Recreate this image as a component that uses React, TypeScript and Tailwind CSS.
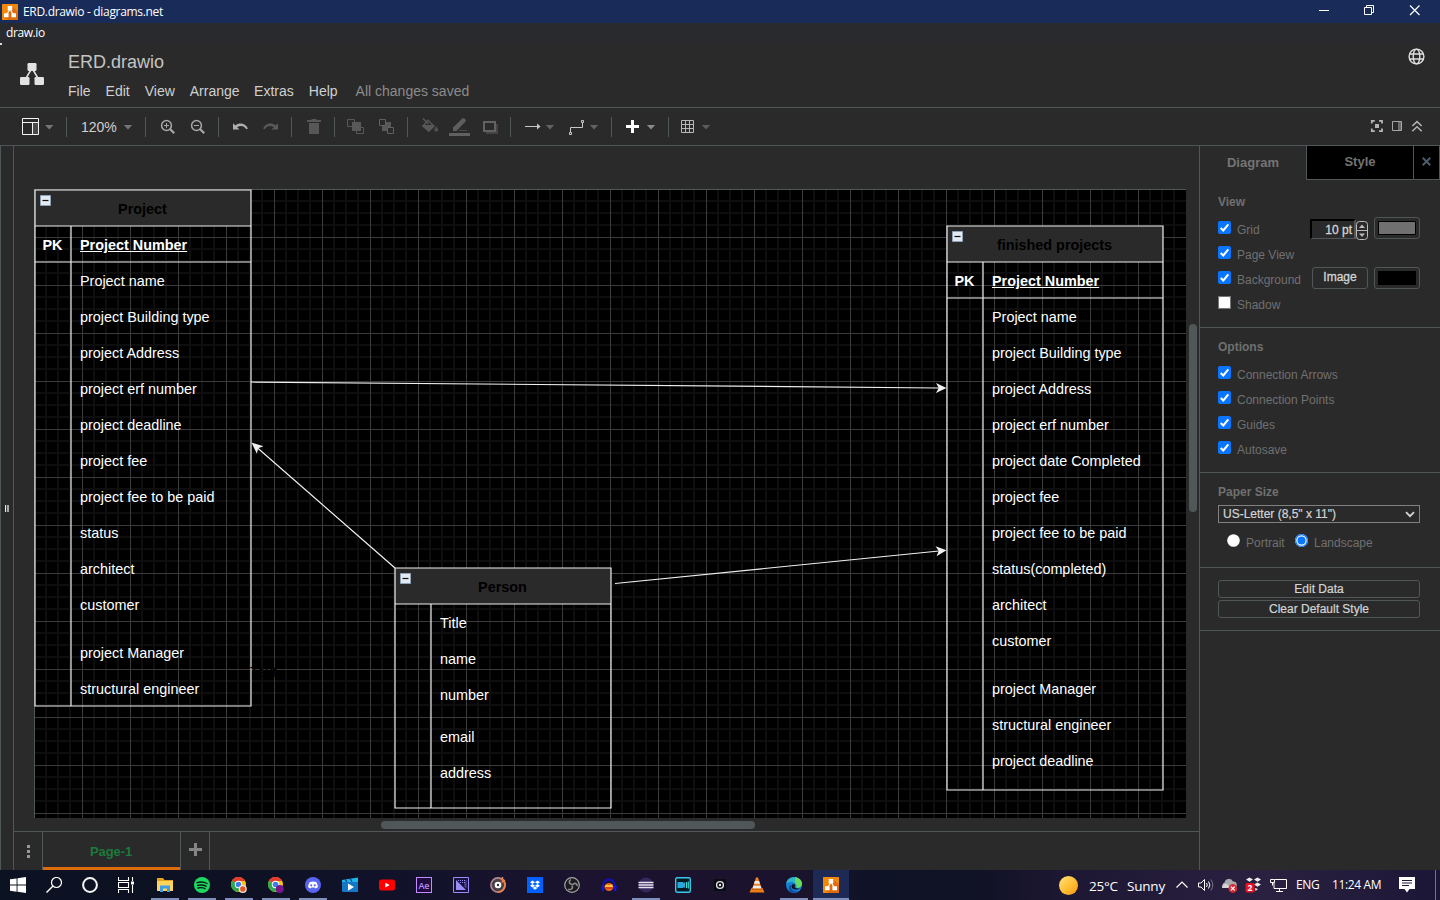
import React from "react";

type Kids = { children?: React.ReactNode };

/* ---------- toolbar ---------- */

function Tool({ x, w, children }: { x: number; w: number } & Kids) {
  return (
    <svg width={w} height={37} viewBox={`${x} 108 ${w} 37`} className="shrink-0" fill="none">
      {children}
    </svg>
  );
}

function Divider() {
  return <div className="h-5 w-px shrink-0 bg-[#505759]" />;
}

function Caret({ x, c = "#767676" }: { x: number; c?: string }) {
  return <path d={`M${x} 125h8.4l-4.2 4.6z`} fill={c} />;
}

function Toolbar() {
  return (
    <div className="flex h-[38px] shrink-0 items-center border-b border-[#505759]">
      <Tool x={0} w={66}>
        <path d="M22.5 118.5h16v16h-16zM22 122.5h17M32.5 122.5v12" stroke="#f4f4f4" />
        <path d="M33 123h5v11h-5z" fill="#4a4a4a" />
        <Caret x={45} />
      </Tool>
      <Divider />
      <div className="flex h-[37px] w-[78px] items-center">
        <span className="ml-[14px] w-[40px] pt-[2px] text-sm leading-[37px] text-[#cfcfcf]">120%</span>
        <Tool x={121} w={20}>
          <Caret x={123.8} />
        </Tool>
      </div>
      <Divider />
      <Tool x={146} w={36}>
        <circle cx="166.5" cy="125.5" r="4.9" stroke="#a8a8a8" strokeWidth="1.5" />
        <path d="M170.2 129.2l4 4" stroke="#a8a8a8" strokeWidth="2.2" />
        <path d="M164 125.5h5M166.5 123v5" stroke="#a8a8a8" />
      </Tool>
      <Tool x={182} w={36}>
        <circle cx="196.5" cy="125.5" r="4.9" stroke="#a8a8a8" strokeWidth="1.5" />
        <path d="M200.2 129.2l4 4" stroke="#a8a8a8" strokeWidth="2.2" />
        <path d="M194 125.5h5" stroke="#a8a8a8" />
      </Tool>
      <Divider />
      <Tool x={219} w={36}>
        <path d="M233 123.2v6.3h6.5l-2.4-2.3c3.3-2.2 7.1-1.600 9.200 2.100l1.600-.8c-2.400-5.200-8.400-6.400-12.500-3z" fill="#b0b0b0" />
      </Tool>
      <Tool x={255} w={36}>
        <path d="M278 123.200v6.300h-6.500l2.400-2.300c-3.300-2.200-7.100-1.600-9.200 2.100l-1.600-.8c2.400-5.200 8.400-6.400 12.500-3z" fill="#5a5a5a" />
      </Tool>
      <Divider />
      <Tool x={292} w={42}>
        <path d="M307 120h4l1-1h4l1 1h4v2h-14zM309 123h10v11h-10z" fill="#575757" />
      </Tool>
      <Divider />
      <Tool x={335} w={36}>
        <path d="M352 122h9v9h-9z" fill="#585858" />
        <path d="M352 126.500h-4.500v-7h7v2.500M359 133.500h4.500v-6h-2.500M356.500 131v2.500h4" stroke="#585858" />
      </Tool>
      <Tool x={371} w={36}>
        <path d="M382 122h9v9h-9z" fill="#585858" />
        <path d="M379.500 119.500h6v6h-6zM387.500 127.500h6v6h-6z" fill="#2a2a2a" stroke="#606060" />
      </Tool>
      <Divider />
      <Tool x={408} w={34}>
        <path d="M423 118.500l5.500 5.500M428 120.200l6 6-5.200 5-6-5z" stroke="#585858" strokeWidth="1.300" />
        <path d="M422 125h12.500l-5.800 7z" fill="#585858" />
        <path d="M436.200 126l1.800 3.200a1.900 1.900 0 1 1-3.600 0z" fill="#505050" />
      </Tool>
      <Tool x={442} w={34}>
        <path d="M453 131v-3.400l9-8.800c1.600-1.600 5 1.400 3.400 3l-9 9.200z" fill="#5e5e5e" />
        <path d="M459 130.500h8" stroke="#4a4a4a" />
        <path d="M449 133h21v3h-21z" fill="#606060" />
      </Tool>
      <Tool x={476} w={34}>
        <path d="M486 124h12v10h-12z" fill="#444" />
        <path d="M484 122h11v9h-11z" fill="#2a2a2a" stroke="#626262" strokeWidth="2" />
      </Tool>
      <Divider />
      <Tool x={511} w={50}>
        <path d="M525 126.500h12" stroke="#c8c8c8" />
        <path d="M537 123.500l3.500 3-3.500 3z" fill="#c8c8c8" />
        <Caret x={545.8} c="#626262" />
      </Tool>
      <Tool x={561} w={50}>
        <path d="M570.500 132v-4.500h12v-5" stroke="#c8c8c8" />
        <path d="M569.500 132.500h2v2h-2zM581.500 120.500h2v2h-2z" fill="#2a2a2a" stroke="#c8c8c8" />
        <Caret x={589.8} c="#626262" />
      </Tool>
      <Divider />
      <Tool x={612} w={56}>
        <path d="M626 126.500h13M632.500 120v13" stroke="#fff" strokeWidth="3" />
        <Caret x={646.8} c="#8a8a8a" />
      </Tool>
      <Divider />
      <Tool x={669} w={50}>
        <path d="M681.500 120.500h12v12h-12zM681 124.500h13M681 128.500h13M685.500 120v13M689.500 120v13" stroke="#b8b8b8" />
        <Caret x={701.8} c="#5c5c5c" />
      </Tool>
      <div className="grow" />
      <Tool x={1360} w={80}>
        <path d="M1371.800 123.500v-2.700h3M1379 120.800h3v2.700M1382 128.500v2.700h-3M1374.800 131.200h-3v-2.700" stroke="#b4b4b4" strokeWidth="1.800" />
        <path d="M1375 124h4v4h-4z" fill="#b4b4b4" />
        <path d="M1392.500 121.500h9v9h-9z" stroke="#a6a6a6" />
        <path d="M1398 122h3v8h-3z" fill="#6c6c6c" />
        <path d="M1412.300 126l4.700-4.400 4.700 4.400M1412.300 131.200l4.700-4.400 4.700 4.400" stroke="#b4b4b4" strokeWidth="1.500" />
      </Tool>
    </div>
  );
}

/* ---------- diagram ---------- */

type Field = { label: string; gap?: "sm" | "md" };

const projectFields: Field[] = [
  { label: "Project name" },
  { label: "project Building type" },
  { label: "project Address" },
  { label: "project erf number" },
  { label: "project deadline" },
  { label: "project fee" },
  { label: "project fee to be paid" },
  { label: "status" },
  { label: "architect" },
  { label: "customer" },
  { label: "project Manager", gap: "md" },
  { label: "structural engineer" },
];

const finishedFields: Field[] = [
  { label: "Project name" },
  { label: "project Building type" },
  { label: "project Address" },
  { label: "project erf number" },
  { label: "project date Completed" },
  { label: "project fee" },
  { label: "project fee to be paid" },
  { label: "status(completed)" },
  { label: "architect" },
  { label: "customer" },
  { label: "project Manager", gap: "md" },
  { label: "structural engineer" },
  { label: "project deadline" },
];

const personFields: Field[] = [
  { label: "Title" },
  { label: "name" },
  { label: "number" },
  { label: "email", gap: "sm" },
  { label: "address" },
];

function Entity({ place, h, title, pk, fields }: { place: string; h: number; title: string; pk?: boolean; fields: Field[] }) {
  return (
    <div className={`absolute w-[216px] text-[14.4px] text-white ${place}`}>
      <svg className="absolute -left-px -top-px" width={218} height={h + 2} viewBox={`-1 -1 218 ${h + 2}`} fill="none">
        <path d="M0 0h216v36H0z" fill="#2a2a2a" />
        <path d={`M0 0h216v${h}H0zM0 36h216M36 36V${h}${pk ? "M0 72h216" : ""}`} stroke="#f0f0f0" strokeWidth="1.2" />
        <path d="M5.5 5.500h10v10h-10z" fill="#e4eaf0" stroke="#8fa3b8" />
        <path d="M7.500 10.500h6" stroke="#111" strokeWidth="1.200" />
      </svg>
      <div className="relative flex h-9 items-center justify-center pr-px pt-1 font-bold text-black">{title}</div>
      {pk && (
        <div className="relative flex h-9 items-center pt-1 font-bold">
          <span className="w-9 pr-px text-center">PK</span>
          <span className="pl-[9px] underline">Project Number</span>
        </div>
      )}
      {fields.map((f) => (
        <div
          key={f.label}
          className={`relative flex h-9 items-center whitespace-nowrap pl-[45px] pt-1 ${f.gap === "md" ? "mt-3" : f.gap === "sm" ? "mt-1.5" : ""}`}
        >
          {f.label}
        </div>
      ))}
    </div>
  );
}

function Canvas() {
  return (
    <div className="relative min-h-0 grow overflow-hidden">
      <svg className="absolute left-[20px] top-[43px]" width={1152} height={629}>
        <defs>
          <pattern id="grid" width="48" height="48" patternUnits="userSpaceOnUse">
            <path d="M11 0h2v48h-2zM23 0h2v48h-2zM35 0h2v48h-2zM0 11h48v2h-48zM0 23h48v2h-48zM0 35h48v2h-48z" fill="#0e0e0e" />
            <path d="M0 0h48v1h-48zM0 0h1v48h-1z" fill="#3b3b3b" />
          </pattern>
        </defs>
        <rect width="1152" height="629" fill="#000" />
        <rect width="1152" height="629" fill="url(#grid)" />
        <path d="M0 .5h1152M.5 0v629" stroke="#505759" />
      </svg>
      <Entity place="left-[21px] top-[44px]" h={516} title="Project" pk fields={projectFields} />
      <Entity place="left-[381px] top-[422px]" h={240} title="Person" fields={personFields} />
      <Entity place="left-[933px] top-[80px]" h={564} title="finished projects" pk fields={finishedFields} />
      <div className="absolute left-[236px] top-[518px] text-[14.4px] leading-[17px] text-black">Text</div>
      <svg className="absolute left-0 top-0" width={1185} height={685} viewBox="14 146 1185 685">
        <path d="M251 382L939 388M395 568L257 447.500M615 583.500L939 551" stroke="#f0f0f0" strokeWidth="1.200" fill="none" />
        <g fill="#f0f0f0">
          <path d="M0 0l-10.500 5 2.700-5-2.700-5z" transform="translate(946.500 388) rotate(.5)" />
          <path d="M0 0l-10.500 5 2.700-5-2.700-5z" transform="translate(946.500 550.300) rotate(-5.700)" />
          <path d="M0 0l-11.500 5 2.700-5-2.700-5z" transform="translate(251.500 442.500) rotate(221)" />
        </g>
      </svg>
      <div className="absolute left-[1175px] top-[178px] h-[188px] w-2 rounded-full bg-[#505759]" />
      <div className="absolute left-[367px] top-[675px] h-2 w-[374px] rounded-full bg-[#505759]" />
    </div>
  );
}

function PageTabs() {
  return (
    <div className="flex h-[39px] shrink-0 border-t border-[#505759]">
      <div className="flex w-7 flex-col items-center justify-center gap-[2px] pl-px">
        <i className="size-[3px] bg-[#999]" />
        <i className="size-[3px] bg-[#999]" />
        <i className="size-[3px] bg-[#999]" />
      </div>
      <div className="flex w-[139px] flex-col border-x border-[#505759]">
        <div className="grow pt-px text-center text-[13px] font-bold leading-[37px] tracking-[-0.1px] text-[#1c7a3b]">
          <span className="pr-px">Page-1</span>
        </div>
        <div className="-mt-[3px] h-[3px] shrink-0 bg-[#df6c0c]" />
      </div>
      <div className="flex w-[29px] justify-center border-r border-[#505759] pt-[11px]">
        <svg width="13" height="13">
          <path d="M0 6.500h13M6.500 0v13" stroke="#858585" strokeWidth="3" />
        </svg>
      </div>
    </div>
  );
}

/* ---------- format panel ---------- */

function Check({ label, on = true, children }: { label: string; on?: boolean } & Kids) {
  return (
    <div className="flex h-[25px] items-start">
      <svg width="13" height="13" className="mt-[4px] shrink-0">
        <rect width="13" height="13" rx="2" fill={on ? "#0a75ff" : "#fff"} />
        {!on && <rect x=".5" y=".5" width="12" height="12" rx="1.500" fill="none" stroke="#767676" />}
        {on && <path d="M2.700 7l2.600 2.500 5-6.200" fill="none" stroke="#fff" strokeWidth="2" />}
      </svg>
      <span className="ml-[6px] mt-[5px] w-[75px] whitespace-nowrap text-xs leading-[16px] text-[#707070]">{label}</span>
      {children}
    </div>
  );
}

function Heading({ children }: Kids) {
  return <div className="h-[15px] pt-px text-xs font-bold leading-[15px] text-[#707070]">{children}</div>;
}

function Swatch({ color }: { color: string }) {
  return (
    <div className="ml-[6px] h-[22px] w-[46px] shrink-0 rounded-[3px] border border-[#505759] p-[3px]">
      <div className={`h-[14px] w-full border border-black ${color}`} />
    </div>
  );
}

function FormatPanel() {
  return (
    <aside className="flex w-[241px] shrink-0 flex-col border-l border-[#505759]">
      <div className="flex h-[34px] text-[13px] font-bold text-[#747474]">
        <div className="w-[106px] text-center leading-[33px]">Diagram</div>
        <div className="w-[107px] border-b border-l border-[#505759] bg-black text-center leading-[31px]">Style</div>
        <div className="flex w-[27px] items-center justify-center border-x border-b border-[#505759] bg-black pb-[2px]">
          <svg width="9" height="9">
            <path d="M.7.7l7.600 7.600M8.300.7L.7 8.300" stroke="#4b5c6c" strokeWidth="2" />
          </svg>
        </div>
      </div>

      <section className="h-[148px] border-b border-[#505759] pl-[18px] pt-[14px]">
        <Heading>View</Heading>
        <div className="pt-[8px]">
          <Check label="Grid">
            <div className="-ml-[2px] mt-[2px] flex h-5 w-[46px] shrink-0 items-center justify-end border-2 border-b border-black border-b-[#505759] border-r-[#505759] pr-[2px] text-xs text-[#d4d4d4]">
              <span className="[-webkit-text-stroke:0.3px_#d4d4d4]">10 pt</span>
            </div>
            <svg width="12" height="19" className="mt-[4px] shrink-0" fill="none">
              <rect x=".5" y=".5" width="11" height="18" rx="3" stroke="#bbb" />
              <path d="M0 9.500h12" stroke="#bbb" />
              <path d="M3 7l3-3.500 3 3.500zM3 12.500l3 3.500 3-3.500z" fill="#bbb" />
            </svg>
            <Swatch color="bg-[#707070]" />
          </Check>
          <Check label="Page View" />
          <Check label="Background">
            <div className="flex h-[22px] w-[56px] shrink-0 items-center justify-center rounded-[3px] border border-[#505759] pb-[2px] text-xs text-[#d4d4d4] [-webkit-text-stroke:0.3px_#d4d4d4]">
              Image
            </div>
            <Swatch color="bg-black" />
          </Check>
          <Check label="Shadow" on={false} />
        </div>
      </section>

      <section className="h-[145px] border-b border-[#505759] pl-[18px] pt-[11px]">
        <Heading>Options</Heading>
        <div className="pt-[8px]">
          <Check label="Connection Arrows" />
          <Check label="Connection Points" />
          <Check label="Guides" />
          <Check label="Autosave" />
        </div>
      </section>

      <section className="h-[95px] border-b border-[#505759] pl-[18px] pt-[11px]">
        <Heading>Paper Size</Heading>
        <div className="mt-[6px] flex h-[18px] w-[202px] items-center justify-between border border-[#808080] pl-1 pr-1 text-xs text-[#d4d4d4]">
          <span className="[-webkit-text-stroke:0.2px_#d4d4d4]">US-Letter (8,5" x 11")</span>
          <svg width="10" height="7" fill="none">
            <path d="M1 1.200l4 4 4-4" stroke="#d4d4d4" strokeWidth="1.800" />
          </svg>
        </div>
        <div className="flex pl-[9px] pt-[11px] text-xs leading-[16px] text-[#707070]">
          <svg width="13" height="13">
            <circle cx="6.500" cy="6.500" r="6.300" fill="#fff" />
          </svg>
          <span className="ml-[6px] mt-px w-[49px]">Portrait</span>
          <svg width="13" height="13">
            <circle cx="6.500" cy="6.500" r="6.500" fill="#fff" />
            <circle cx="6.500" cy="6.500" r="5.800" fill="none" stroke="#0a75ff" strokeWidth="1.200" />
            <circle cx="6.500" cy="6.500" r="4" fill="#0a75ff" />
          </svg>
          <span className="ml-[6px] mt-px">Landscape</span>
        </div>
      </section>

      <section className="flex h-[63px] flex-col gap-[2px] border-b border-[#505759] pl-[18px] pt-[12px]">
        {["Edit Data", "Clear Default Style"].map((t) => (
          <div
            key={t}
            className="h-[18px] w-[202px] shrink-0 rounded-[3px] border border-[#505759] text-center text-xs leading-[16px] text-[#d4d4d4] [-webkit-text-stroke:0.2px_#d4d4d4]"
          >
            {t}
          </div>
        ))}
      </section>
    </aside>
  );
}

/* ---------- task bar ---------- */

function DrawioLogo() {
  return (
    <svg width="16" height="16" viewBox="0 0 16 16">
      <rect width="16" height="16" rx=".5" fill="#f08705" />
      <path d="M10 2l6 6v8H6l-4-3z" fill="#df6c0c" />
      <path d="M8 5L4.500 11M8 5l3.500 6" stroke="#fff" strokeWidth="1.200" />
      <path d="M5.700 2h4.600v4.200H5.700zM2 9.300h4.600v4H2zM9.400 9.300H14v4H9.400z" fill="#fff" />
    </svg>
  );
}

function G({ children }: Kids) {
  return (
    <svg width="16" height="16" viewBox="0 0 16 16" fill="none">
      {children}
    </svg>
  );
}

function Chrome({ badge, inner }: { badge: string; inner: string }) {
  return (
    <G>
      <circle cx="7.500" cy="7.500" r="7.500" fill="#fbc116" />
      <path d="M7.500 7.500L1 3.800A7.500 7.500 0 0 1 14.200 4H7.500z" fill="#e33b2e" />
      <path d="M7.500 7.500L1 3.800A7.500 7.500 0 0 0 7 15l3.500-5.500z" fill="#2da94f" />
      <circle cx="7.500" cy="7.500" r="3.700" fill="#fff" />
      <circle cx="7.500" cy="7.500" r="2.800" fill="#3f7de8" />
      <circle cx="11.800" cy="12" r="4" fill={badge} />
      <circle cx="11.800" cy="12" r="2.700" fill={inner} />
    </G>
  );
}

const apps: { icon: React.ReactNode; open?: boolean; active?: boolean }[] = [
  {
    open: true,
    icon: (
      <G>
        <path d="M0 1h6l1.500 2H16v11H0z" fill="#e8a317" />
        <path d="M0 4h16v10H0z" fill="#ffd35c" />
        <path d="M3 15V8.500h10V15h-3v-3.500H6V15z" fill="#3e9fe8" />
      </G>
    ),
  },
  {
    open: true,
    icon: (
      <G>
        <circle cx="8" cy="8" r="8" fill="#1ed760" />
        <path d="M3 5.600c3.500-1 7-.7 10 .9M3.600 8.400c3-.8 6-.5 8.500.8M4 11c2.600-.6 5-.4 7 .7" stroke="#0b1a12" strokeWidth="1.400" strokeLinecap="round" />
      </G>
    ),
  },
  { open: true, icon: <Chrome badge="#f3e4dc" inner="#e0552b" /> },
  { open: true, icon: <Chrome badge="#6a1b9a" inner="#8a1080" /> },
  {
    open: true,
    icon: (
      <G>
        <circle cx="8" cy="8" r="8" fill="#5865f2" />
        <path d="M4.800 5Q8 3.800 11.200 5q1.700 2.600 1.600 5.300-1.400 1-2.500 1.100l-.6-1H6.300l-.6 1Q4.500 11.300 3.200 10.300 3.100 7.600 4.800 5z" fill="#fff" />
        <circle cx="6.200" cy="8.300" r="1.100" fill="#5865f2" />
        <circle cx="9.800" cy="8.300" r="1.100" fill="#5865f2" />
      </G>
    ),
  },
  {
    icon: (
      <G>
        <path d="M0 5h16v10H1l-1-1z" fill="#1277c4" />
        <path d="M0 3l16-2.500V5H0z" fill="#22b5ea" />
        <path d="M3 2.500l2 2.300M8 1.700l2 3" stroke="#0c4a86" strokeWidth="1.300" />
        <path d="M6 6.500l6 3.600-6 3.700z" fill="#fff" />
      </G>
    ),
  },
  {
    icon: (
      <G>
        <rect y="2.500" width="16" height="11" rx="2.500" fill="#f00" />
        <path d="M6.300 5.700l4.400 2.300-4.400 2.400z" fill="#fff" />
      </G>
    ),
  },
  {
    icon: (
      <div className="flex size-4 items-center justify-center border border-[#c48aff] bg-[#1f0b3d] font-['Open_Sans','Noto_Sans',sans-serif] text-[9px] font-semibold leading-none text-[#b48cf0]">
        Ae
      </div>
    ),
  },
  {
    icon: (
      <G>
        <path d="M.5.5h15v15H.5z" fill="#17123e" stroke="#9a8cf5" />
        <path d="M3 3l10 10H3z" fill="#9a8cf5" />
        <path d="M5 3.500h8v8" stroke="#9a8cf5" strokeDasharray="1 1" />
        <path d="M7 5.500h5v5" stroke="#9a8cf5" strokeDasharray="1 1" />
      </G>
    ),
  },
  {
    icon: (
      <G>
        <circle cx="8" cy="8" r="7.100" fill="#4a4146" stroke="#b48a94" strokeWidth="1.600" />
        <path d="M11 1.600A7.100 7.100 0 0 1 8 15" stroke="#e8824c" strokeWidth="1.700" />
        <circle cx="8" cy="8" r="3.300" fill="#fff" />
        <circle cx="8" cy="8" r="1.200" fill="#333" />
        <path d="M12.500 0v5l2.500-2" stroke="#e8824c" strokeWidth="1.500" />
      </G>
    ),
  },
  {
    icon: (
      <G>
        <path d="M0 0h16v16H0z" fill="#0061fe" />
        <path d="M5.500 3.500L8 5.200 5.500 6.900 3 5.200zM10.500 3.500L13 5.200l-2.500 1.700L8 5.200zM5.500 7L8 8.700l-2.500 1.700L3 8.700zM10.500 7L13 8.700l-2.500 1.700L8 8.700zM8 9.500l2.400 1.600L8 12.700l-2.400-1.600z" fill="#fff" />
      </G>
    ),
  },
  {
    icon: (
      <G>
        <circle cx="8" cy="8" r="7.300" fill="#1c1b1f" stroke="#a5a5a5" strokeWidth="1.200" />
        <path d="M8 7.500C4.500 7 4.600 3.500 7 2.600M8.500 8c2-3 5-1.300 4.700 1.200M8 8.500c1.500 3.200-1.500 4.900-3.700 3.600" stroke="#8b8b8b" strokeWidth="1.500" />
      </G>
    ),
  },
  {
    icon: (
      <G>
        <path d="M2 9a6 6.500 0 0 1 12 0" stroke="#1010c8" strokeWidth="1.800" />
        <path d="M0 9l3-1v6.500L1 14zM16 9l-3-1v6.500l2-.5z" fill="#1515d8" />
        <ellipse cx="8" cy="10" rx="4.500" ry="4" fill="#e8641c" />
        <path d="M4 9l2-1.500 2 1 2-1.200L12 9v1H4z" fill="#ffc83a" />
        <path d="M4 11h8" stroke="#d8211c" />
      </G>
    ),
  },
  {
    open: true,
    icon: (
      <G>
        <circle cx="8" cy="8" r="7.500" fill="#35285c" />
        <path d="M.5 5.500h15M.5 8h15M.5 10.500h15" stroke="#e6e3ee" strokeWidth="1.300" />
      </G>
    ),
  },
  {
    icon: (
      <G>
        <rect x=".7" y=".7" width="14.600" height="14.600" rx="1.500" fill="#061a22" stroke="#37c8ec" strokeWidth="1.400" />
        <path d="M2.500 5h6v1.500L10 5v6L8.500 9.700V11h-6z" fill="#2aa8dc" />
        <path d="M11.500 5v6M13.300 4.500v7" stroke="#3be0cf" strokeWidth="1.100" />
      </G>
    ),
  },
  {
    icon: (
      <G>
        <path d="M2 2h12v12H2z" fill="#0b0d14" />
        <circle cx="8" cy="8" r="3.400" stroke="#e4e4e4" strokeWidth="1.400" />
        <circle cx="8" cy="8" r="1.200" fill="#e4e4e4" />
      </G>
    ),
  },
  {
    icon: (
      <G>
        <path d="M7 .5h2l4 12H3z" fill="#f58220" />
        <path d="M5.900 4h4.200l.9 2.700H5zM4.300 8.800h7.400l.8 2.500h-9z" fill="#ececec" />
        <path d="M2.500 11h1l-.3 1.500h9.600L12.500 11h1L15.500 15.500H.5z" fill="#f07c14" />
      </G>
    ),
  },
  {
    open: true,
    icon: (
      <G>
        <circle cx="8" cy="8" r="8" fill="#1583d4" />
        <path d="M.3 6.500C1.500-1 12-2 15.300 5.200c1.500 4-1.800 5.800-5 5.500C11 7 8 4.600 4.500 5 2.500 5.200 1 6 .3 6.500z" fill="#2fb4c8" />
        <path d="M9 .2c4 0 8.500 4.300 6.600 8.300-1 2-3.300 2.400-5.300 2.200 1-2.500 0-4.200-1.300-5z" fill="#6bdb5c" />
        <path d="M5.500 7.500c-2 4 2 8 7 6.200A8 8 0 0 1 5 15.400C1.500 13 2.500 8.500 5.500 7.500z" fill="#0d4fa5" />
        <path d="M6.500 7.300c2-.8 3 .8 2.300 2.300-.6 1.400 2 2.600 5 1.600-2 2.200-8.500 1.800-8.300-2z" fill="#10142a" />
      </G>
    ),
  },
  { open: true, active: true, icon: <DrawioLogo /> },
];

function TaskBar() {
  return (
    <footer className="flex h-[30px] shrink-0 items-center bg-[linear-gradient(90deg,#0b1222_0%,#0e1123_18%,#11122a_27%,#1b132f_40%,#1b132d_55%,#0e1326_61%,#111225_68%,#1d1733_74%,#2a2140_88%,#1c1636_100%)] font-['Open_Sans','Noto_Sans',sans-serif] text-[12px] text-white">
      <div className="flex w-9 justify-center">
        <G>
          <path d="M0 2.300L6.600 1.400v6.200H0zM7.500 1.300L16 0v7.600H7.500zM0 8.500h6.600v6.200L0 13.800zM7.500 8.500H16V16l-8.500-1.200z" fill="#fff" />
        </G>
      </div>
      <div className="flex w-9 justify-center">
        <G>
          <circle cx="10.500" cy="5.500" r="5" stroke="#fff" strokeWidth="1.200" />
          <path d="M7 9L.5 15.500" stroke="#fff" strokeWidth="1.400" />
        </G>
      </div>
      <div className="flex w-9 justify-center">
        <G>
          <circle cx="8" cy="8" r="6.900" stroke="#f5f5f5" strokeWidth="2" />
        </G>
      </div>
      <div className="flex w-9 justify-center">
        <G>
          <path d="M.5 0v3.500h10V0M.5 16v-3.500h10V16M.5 5.500h10v5H.5zM14.500 0v4M14.500 8v8" stroke="#fff" strokeWidth="1.100" />
          <path d="M13 4.500h3v3h-3z" fill="#fff" />
        </G>
      </div>
      <div className="flex pl-[2px]">
        {apps.map((a, i) => (
          <div key={i} className="relative h-[30px] w-[37px] pl-[11px] pt-[7px]">
            {a.active && <span className="absolute bottom-0 left-px top-0 w-9 bg-[#1c2a55]" />}
            {a.open && <span className={`absolute bottom-0 h-[2px] bg-[#7e8fbb] ${a.active ? "left-px w-9" : "left-[5px] w-7"}`} />}
            <div className="relative">{a.icon}</div>
          </div>
        ))}
      </div>
      <div className="grow" />
      <div className="flex h-[30px] w-[381px] shrink-0 items-center">
        <div className="size-[19px] rounded-full bg-[linear-gradient(135deg,#ffe477,#ffc13a_50%,#ff9512)]" />
        <span className="ml-[11px] mt-[2px] w-[38px] whitespace-nowrap text-[13.5px] tracking-[-0.2px]">25°C</span>
        <span className="mt-[2px] w-[48px] whitespace-nowrap text-[13.5px] tracking-[-0.2px]">Sunny</span>
        <svg width="14" height="16" fill="none">
          <path d="M1.500 10.500L7 5l5.500 5.500" stroke="#fff" strokeWidth="1.200" />
        </svg>
        <svg width="18" height="16" fill="none" className="ml-[8px]">
          <path d="M1.500 6h2.500l3.500-3.500v11L4 10H1.500z" stroke="#fff" />
          <path d="M9.500 6q1.500 2 0 4M11.500 4.500q2.800 3.500 0 7" stroke="#fff" />
          <path d="M13.800 2.500q4 5.500 0 11" stroke="#777" />
        </svg>
        <svg width="17" height="16" fill="none" className="ml-[6px]">
          <path d="M3 11a3 3 0 0 1 .5-5.500A4.500 4.500 0 0 1 12 4.500 3.200 3.200 0 0 1 13 11z" fill="#a9a9ae" />
          <path d="M1 11a3.500 3.500 0 0 1 6-3l3 3z" fill="#d5d5d8" />
          <circle cx="11.800" cy="11.500" r="4.400" fill="#d62a35" />
          <path d="M9.900 9.600l3.800 3.800M13.700 9.600l-3.800 3.800" stroke="#fff" strokeWidth="1.300" />
        </svg>
        <svg width="17" height="16" fill="none" className="ml-[7px]">
          <path d="M4.500.5L8 2.600 4.500 4.700 1 2.600zM12.500.5L16 2.600l-3.500 2.100L9 2.600zM12.500 5.500L16 7.600l-3.500 2.100L9 7.600zM10 11l3 1-2.500 2z" fill="#eee" />
          <rect x=".5" y="6" width="9" height="9.500" rx="1.500" fill="#e81123" />
          <text x="5" y="14" fontSize="8.500" fontWeight="700" textAnchor="middle" fill="#fff">2</text>
        </svg>
        <svg width="17" height="16" fill="none" className="ml-[8px]">
          <path d="M5 2.500h11.500v9H4V6M9.500 11.500v3M6 14.500h7" stroke="#fff" />
          <path d="M.5 2.500h4v3h-4zM2.500 5.500v3" stroke="#fff" />
        </svg>
        <span className="ml-[9px] w-[36px] whitespace-nowrap tracking-[-0.3px]">ENG</span>
        <span className="w-[60px] whitespace-nowrap tracking-[-0.35px]">11:24 AM</span>
        <svg width="16" height="16" className="ml-[7px]" fill="none">
          <path d="M0 0h16v12h-5.500L8 15.500 5.500 12H0z" fill="#fff" />
          <path d="M3 3.500h10M3 6h10M3 8.500h7" stroke="#221b38" strokeWidth="1.100" />
        </svg>
        <div className="ml-[20px] h-[30px] w-px bg-[#77728a]" />
      </div>
    </footer>
  );
}

/* ---------- window ---------- */

export default function App() {
  return (
    <div className="flex h-[900px] w-[1440px] flex-col overflow-hidden bg-[#2a2a2a] font-['Liberation_Sans',Arial,sans-serif]">
      <header className="flex h-[23px] shrink-0 items-center bg-[#192b58] pl-[2px] font-['Open_Sans','Noto_Sans',sans-serif] text-[12px] text-white">
        <DrawioLogo />
        <span className="ml-[5px] tracking-[-0.32px]">ERD.drawio - diagrams.net</span>
        <div className="grow" />
        <svg width="121" height="23" viewBox="1319 0 121 23" fill="none" stroke="#fff">
          <path d="M1319 10.500h10M1364.500 7.500h7v7h-7zM1366.500 7.500v-2h7v7h-2" />
          <path d="M1410 5.500l9.500 9.500M1419.500 5.500L1410 15" strokeWidth="1.200" />
        </svg>
      </header>
      <div className="h-[19px] shrink-0 bg-[#292a2d] pl-[6px] font-['Open_Sans','Noto_Sans',sans-serif] text-[12px] leading-[20px] tracking-[-0.4px] text-white">
        draw.io
      </div>
      <div className="flex h-[66px] shrink-0 border-b border-[#505759]">
        <div className="w-[68px]">
          <div className="mt-px h-[2px] w-[2px] bg-[#ddd]" />
          <svg width="24" height="22" className="ml-5 mt-[18px]" fill="none">
            <path d="M12 5L5 17M12 5l7 12" stroke="#e2e2e2" strokeWidth="1.500" />
            <rect x="7.500" y="0" width="9" height="8" rx="1.300" fill="#e2e2e2" />
            <rect x="0" y="14" width="9.500" height="8" rx="1.300" fill="#e2e2e2" />
            <rect x="14.500" y="14" width="9.500" height="8" rx="1.300" fill="#e2e2e2" />
          </svg>
        </div>
        <div className="grow">
          <div className="pt-[9px] text-[18px] leading-[22px] text-[#c4c4c4]">ERD.drawio</div>
          <nav className="flex gap-[15px] pt-[10px] text-sm leading-[16px] text-[#d0d0d0]">
            <span>File</span>
            <span>Edit</span>
            <span>View</span>
            <span>Arrange</span>
            <span className="-ml-[0.5px]">Extras</span>
            <span>Help</span>
            <span className="ml-[3px] text-[#8c8c8c]">All changes saved</span>
          </nav>
        </div>
        <svg width="17" height="17" viewBox="0 0 17 17" className="mr-[15px] mt-[6px]" fill="none" stroke="#e0e0e0" strokeWidth="1.400">
          <circle cx="8.500" cy="8.500" r="7.400" />
          <ellipse cx="8.500" cy="8.500" rx="3.300" ry="7.400" />
          <path d="M1.600 6h13.800M1.600 11h13.800" />
        </svg>
      </div>
      <Toolbar />
      <div className="flex min-h-0 grow">
        <div className="flex w-[14px] shrink-0 items-center justify-center border-x border-[#505759]">
          <svg width="4" height="7">
            <path d="M.5 0v7M3 0v7" stroke="#e8e8e8" strokeWidth="1.300" />
          </svg>
        </div>
        <main className="flex min-w-0 grow flex-col">
          <Canvas />
          <PageTabs />
        </main>
        <FormatPanel />
      </div>
      <TaskBar />
    </div>
  );
}
